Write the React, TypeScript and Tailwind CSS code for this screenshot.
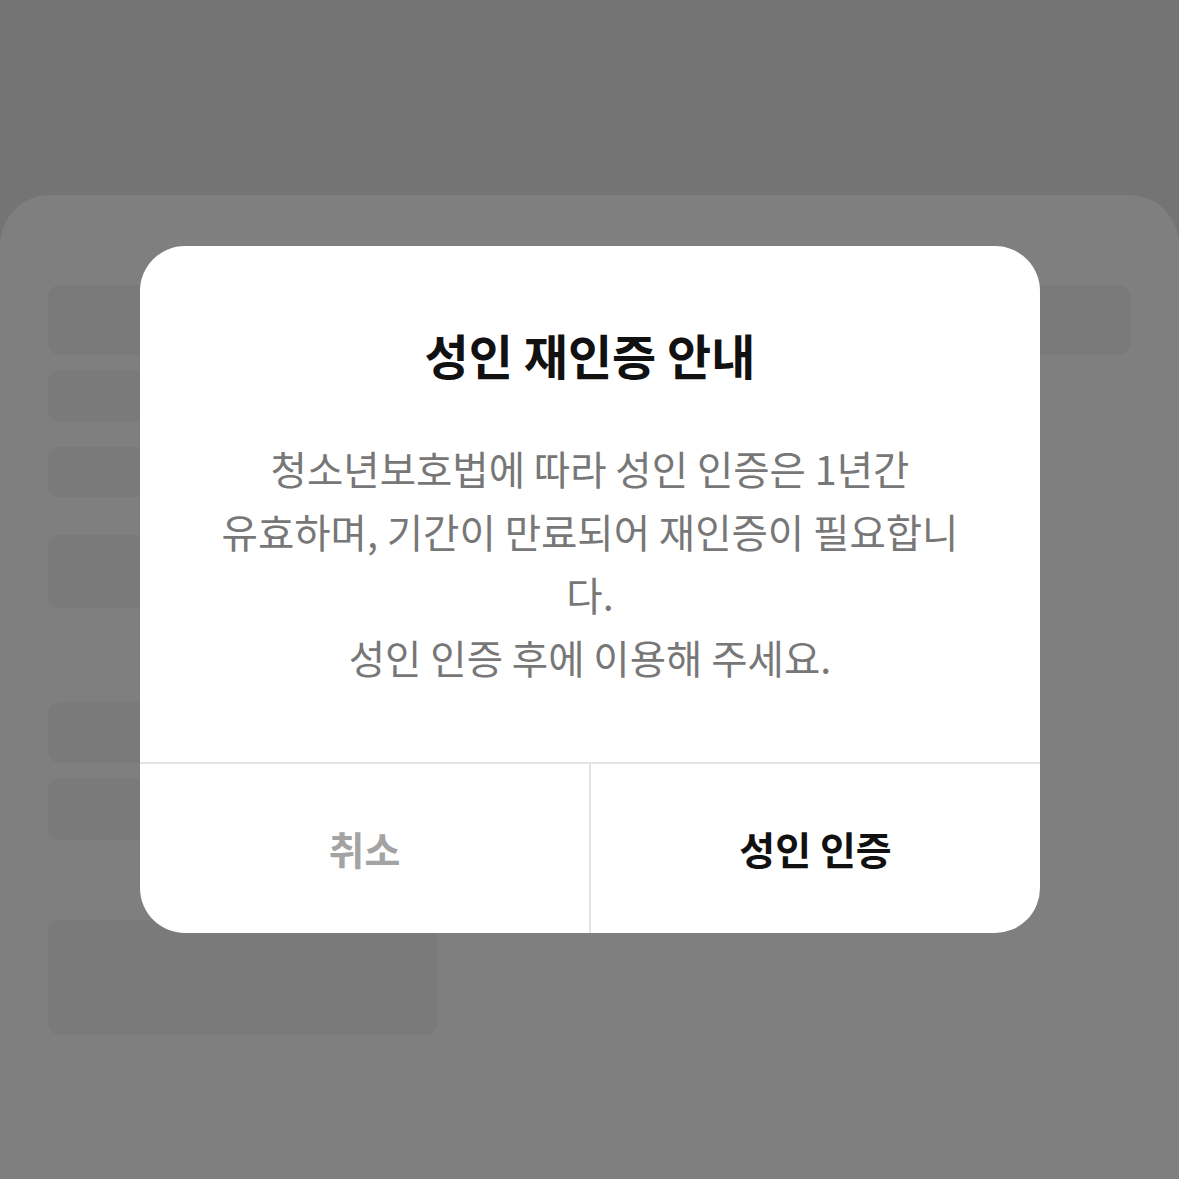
import React from "react";

const font = { fontFamily: '"Noto Sans CJK KR", "Noto Sans", sans-serif' };

// placeholder blocks of the page under the dimmed overlay
function Skeleton({ className }: { className: string }) {
  return <div className={`rounded-[12px] bg-[#7a7a7a] ${className}`} />;
}

export default function App() {
  const bodyLines = [
    "청소년보호법에 따라 성인 인증은 1년간",
    "유효하며, 기간이 만료되어 재인증이 필요합니",
    "다.",
    "성인 인증 후에 이용해 주세요.",
  ];

  return (
    <div className="relative h-[1179px] w-[1179px] overflow-hidden bg-[#747474]" style={font}>
      {/* Page behind the overlay */}
      <div className="mt-[195px] h-[984px] rounded-t-[50px] bg-[#7f7f7f] px-[48px] pt-[90px]">
        <Skeleton className="h-[70px] w-[1083px]" />
        <Skeleton className="mt-[15px] h-[52px] w-[700px]" />
        <Skeleton className="mt-[25px] h-[50px] w-[700px]" />
        <Skeleton className="mt-[38px] h-[73px] w-[700px]" />
        <Skeleton className="mt-[94px] h-[61px] w-[700px]" />
        <Skeleton className="mt-[15px] h-[62px] w-[700px]" />
        <Skeleton className="mt-[80px] h-[115px] w-[389px]" />
      </div>

      {/* Dialog */}
      <div className="absolute left-[140px] top-[246px] flex h-[687px] w-[900px] flex-col overflow-hidden rounded-[45px] bg-white">
        <div className="flex flex-1 flex-col items-center pt-[80px]">
          <h2 className="text-[48px] font-bold leading-[56px] text-[#111111]">성인 재인증 안내</h2>
          <div className="mt-[54px] text-center text-[39.5px] leading-[63px] text-[#777777]">
            {bodyLines.map((line) => (
              <p key={line} className="whitespace-nowrap">{line}</p>
            ))}
          </div>
        </div>
        <div className="flex h-[171px] border-t-2 border-[#e3e3e3]">
          <button className="flex flex-1 items-center justify-center border-r-2 border-[#e3e3e3] text-[39px] font-bold text-[#a3a3a3]">
            취소
          </button>
          <button className="flex flex-1 items-center justify-center text-[39px] font-bold text-[#111111]">
            성인 인증
          </button>
        </div>
      </div>
    </div>
  );
}
